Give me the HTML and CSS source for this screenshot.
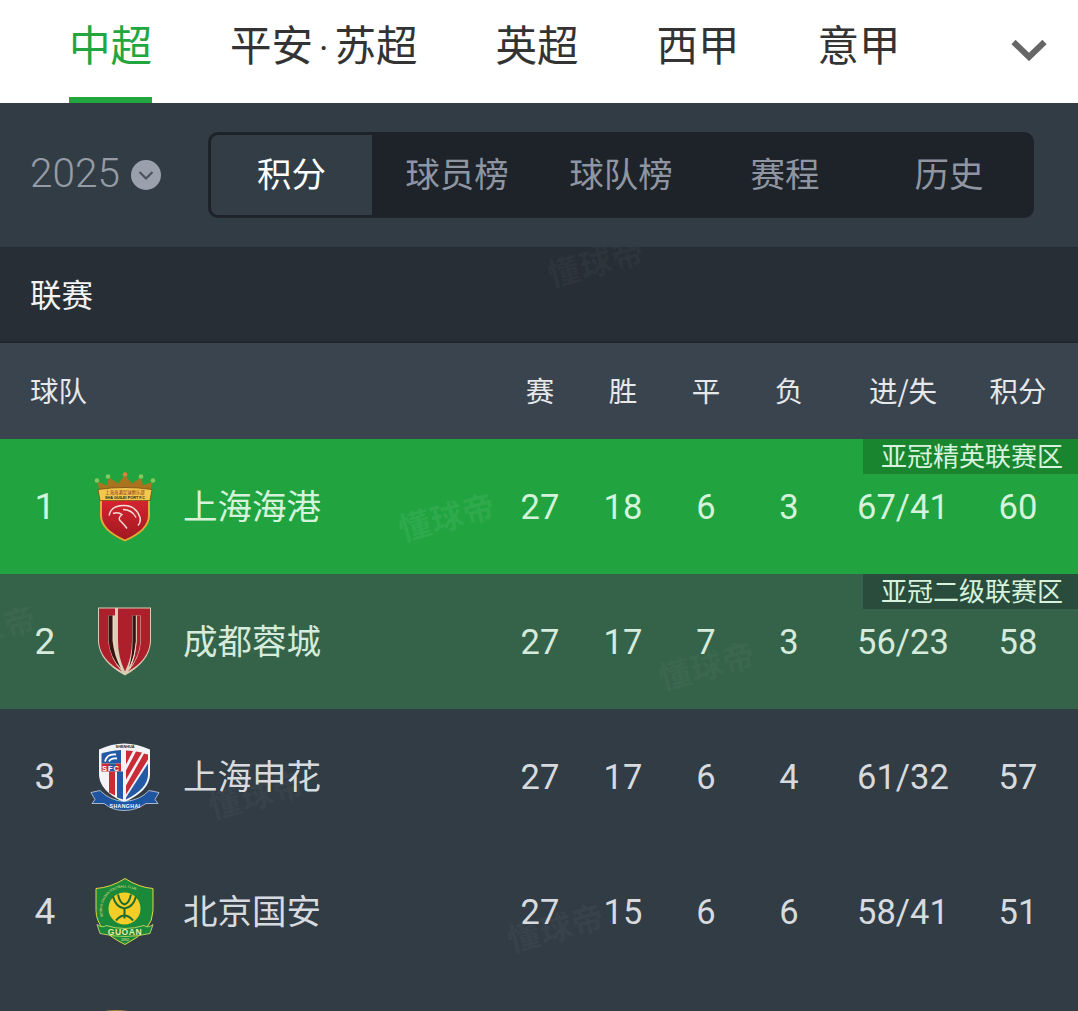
FILE: index.html
```html
<!DOCTYPE html>
<html lang="zh-CN">
<head>
<meta charset="utf-8">
<title>中超积分榜</title>
<link rel="stylesheet" href="styles.css">
</head>
<body>
<div class="page">
  <nav class="nav">
    <a class="nav-item active">中超</a>
    <a class="nav-item">平安<span class="dot">·</span>苏超</a>
    <a class="nav-item">英超</a>
    <a class="nav-item">西甲</a>
    <a class="nav-item">意甲</a>
    <svg class="nav-more" viewBox="0 0 36 22"><path d="M2.500 3 L18 18 L33.500 3" fill="none" stroke="#666" stroke-width="6"/></svg>
  </nav>

  <section class="season">
    <div class="year"><span class="year-num">2025</span><svg class="year-icon" viewBox="0 0 30 30"><circle cx="15" cy="15" r="15" fill="#9aa1ad"/><path d="M8.500 12 L15 18.500 L21.500 12" fill="none" stroke="#4b5360" stroke-width="2.200"/></svg></div>
    <div class="tabs">
      <div class="tab active">积分</div>
      <div class="tab">球员榜</div>
      <div class="tab">球队榜</div>
      <div class="tab">赛程</div>
      <div class="tab">历史</div>
    </div>
  </section>

  <div class="league">联赛<span class="wm wm-league">懂球帝</span></div>

  <div class="row head">
    <div class="rank-head">球队</div>
    <div class="c c1">赛</div><div class="c">胜</div><div class="c">平</div><div class="c">负</div><div class="c gd">进/失</div><div class="c pts">积分</div>
  </div>

  <div class="row team top1">
    <div class="rank">1</div>
    <svg class="crest" viewBox="0 1.500 90 90">
      <defs><linearGradient id="port-red" x1="0" y1="0" x2="0" y2="1"><stop offset="0" stop-color="#d3252e"/><stop offset="1" stop-color="#a31820"/></linearGradient></defs>
      <path fill="#a9731f" d="M20 31 L17 21 L27 25 L29 17 L38 23 L45 15 L52 23 L61 17 L63 25 L73 21 L70 31 Z"/>
      <circle cx="17" cy="20" r="2.300" fill="#7ecb5c"/><circle cx="28" cy="16" r="2.300" fill="#7ecb5c"/><circle cx="45" cy="14" r="2.300" fill="#d9863a"/><circle cx="61" cy="16" r="2.300" fill="#7ecb5c"/><circle cx="73" cy="20" r="2.300" fill="#7ecb5c"/>
      <path fill="#e2ac35" d="M20 36 H70 V55 Q70 70 45 81 Q20 70 20 55 Z"/>
      <path fill="url(#port-red)" d="M22 40 H68 V55 Q68 69 45 79 Q22 69 22 55 Z"/>
      <path fill="#f2c94c" stroke="#7a4a14" stroke-width=".8" d="M18 29 Q45 25 72 29 L70 40 H20 Z"/>
      <text class="crest-tiny" x="45" y="33.500" text-anchor="middle" fill="#8a1a18" font-size="4.400">上海海港足球俱乐部</text>
      <text class="crest-latin" x="45" y="38.600" text-anchor="middle" fill="#222" font-size="3.800" font-weight="700">SHA GUILEI PORT F.C</text>
      <path fill="none" stroke="#f4dcd9" stroke-width="1.500" d="M29 55 Q31 45 44 45 Q56 45 60 57 Q61 62 58 65 M33 53 Q38 51 42 54 Q37 58 41 61 Q45 65 47 68 M43 49 Q52 49 56 57"/>
    </svg>
    <div class="name">上海海港</div>
    <div class="c c1">27</div><div class="c">18</div><div class="c">6</div><div class="c">3</div><div class="c gd">67/41</div><div class="c pts">60</div>
    <span class="tag">亚冠精英联赛区</span>
    <span class="wm wm-r1">懂球帝</span>
  </div>

  <div class="row team top2">
    <div class="rank">2</div>
    <svg class="crest" viewBox="0 1.500 90 90">
      <path fill="#d9cdb4" d="M18 12 H71 V46 Q70 66 45 80 Q19 66 18 46 Z"/>
      <path fill="#ad1f2a" d="M19 13 H35 V20 H28 V45 Q30 64 42 76 Q20 64 19 46 Z"/>
      <path fill="#ad1f2a" d="M38 13 H70 V46 Q69 64 48 76 Q60 63 61 45 V20 H52 V45 Q52 62 45 76 Q38 62 38 45 Z"/>
      <path fill="#3a1214" d="M28.500 20 H32.500 V45 Q34 60 41 73 Q30 62 28.500 45 Z"/>
      <path fill="#3a1214" d="M52.500 20 H56 V46 Q55 60 49 72 Q52.500 60 52.500 45 Z"/>
      <path fill="#ad1f2a" d="M56.500 20 H60.500 V45 Q59.500 60 50.500 72 Q56 60 56.500 46 Z"/>
      <path fill="none" stroke="#e5dcc8" stroke-width=".9" d="M33.800 20 V45 Q35 60 42 74 M56.300 20 V46 Q55.500 60 50 73"/>
    </svg>
    <div class="name">成都蓉城</div>
    <div class="c c1">27</div><div class="c">17</div><div class="c">7</div><div class="c">3</div><div class="c gd">56/23</div><div class="c pts">58</div>
    <span class="tag">亚冠二级联赛区</span>
    <span class="wm wm-r2a">懂球帝</span>
    <span class="wm wm-r2b">懂球帝</span>
  </div>

  <div class="row team">
    <div class="rank">3</div>
    <svg class="crest" viewBox="0 -0.500 90 90">
      <path fill="#f4f4f6" d="M19 17 Q44 5 70 17 V42 Q70 58 44 70 Q19 58 19 42 Z"/>
      <path fill="#245aa5" d="M21.500 21 Q30 18 41 17.500 V31 H21.500 Z"/>
      <path fill="none" stroke="#fff" stroke-width="1.800" d="M25 29 Q27 21 36 22 M29 29 Q31 25 37 26"/>
      <path fill="#c92c36" d="M21.500 31 H29 V39 H21.500 Z"/>
      <path fill="#245aa5" d="M29 31 H36 V39 H29 Z"/>
      <path fill="#c92c36" d="M36 31 H41 V39 H36 Z"/>
      <text x="31" y="38" text-anchor="middle" fill="#fff" font-size="7.500" font-weight="700" letter-spacing="1" class="crest-latin">SFC</text>
      <path fill="#c92c36" d="M29 39 H35 V63 L29 60 Z"/>
      <path fill="#245aa5" d="M37 39 H43 V67 L37 65 Z"/>
      <path fill="#c92c36" d="M46 18 L53 18.500 L46 32 Z M56 19 L62 20 L46 47 V38 Z M64 21 L68 22 V27 L46 62 V53 Z"/>
      <path fill="#245aa5" d="M68 31 V42 Q68 56 46 67 V65 Z"/>
      <text x="45" y="15.500" text-anchor="middle" fill="#222" font-size="3.800" font-weight="700" class="crest-latin">SHENHUA</text>
      <path fill="#1f54a0" stroke="#dfe5ef" stroke-width=".7" d="M11 60 L20 58 Q30 68 44 69 Q60 68 69 58 L79 60 L75 67 L78 71 L66 71 Q56 78 44 78 Q33 78 24 71 L12 71 L15 67 Z"/>
      <text x="45" y="75.500" text-anchor="middle" fill="#fff" font-size="5.200" font-weight="700" letter-spacing=".4" class="crest-latin">SHANGHAI</text>
    </svg>
    <div class="name">上海申花</div>
    <div class="c c1">27</div><div class="c">17</div><div class="c">6</div><div class="c">4</div><div class="c gd">61/32</div><div class="c pts">57</div>
    <span class="wm wm-r3">懂球帝</span>
  </div>

  <div class="row team">
    <div class="rank">4</div>
    <svg class="crest" viewBox="0 -1.500 90 90">
      <defs><path id="guoan-arc" d="M23 48 A22.500 22.500 0 1 1 66 48"/></defs>
      <path fill="#1a8a3a" stroke="#e6d544" stroke-width="1" d="M16 20 Q31 19 45 10 Q59 19 73 20 V42 Q73 62 45 76 Q16 62 16 42 Z"/>
      <text class="crest-latin" font-size="3.300" fill="#e6e48a"><textPath href="#guoan-arc">BEIJING GUOAN FOOTBALL CLUB</textPath></text>
      <circle cx="44.500" cy="40" r="16" fill="#f4cd26"/>
      <path fill="none" stroke="#1a6b30" stroke-width="2" d="M33 28 Q36 39 44.500 40 Q53 39 56 28 M38 26 Q40 35 44.500 36 Q49 35 51 26 M44.500 40 V50 M36 52 Q44.500 42 53 52"/>
      <path fill="#1a8a3a" stroke="#d8e36b" stroke-width=".8" d="M17 56 Q23 60 26 57 Q45 63 64 57 Q68 60 73 56 L70 65 Q45 71 20 65 Z"/>
      <text class="crest-latin" x="45" y="66" text-anchor="middle" font-size="8.500" font-weight="700" letter-spacing=".6" fill="#eceaa8">GUOAN</text>
      <text class="crest-latin" x="45" y="72.500" text-anchor="middle" font-size="3.600" fill="#eceaa8">1992</text>
    </svg>
    <div class="name">北京国安</div>
    <div class="c c1">27</div><div class="c">15</div><div class="c">6</div><div class="c">6</div><div class="c gd">58/41</div><div class="c pts">51</div>
    <span class="wm wm-r4">懂球帝</span>
  </div>

  <div class="row team">
    <div class="rank"></div>
    <svg class="crest" viewBox="0 0 90 90"><path fill="#a98a3c" d="M20 10 Q36 6 53 10 V20 H20 Z"/></svg>
  </div>
</div>
</body>
</html>
```

FILE: styles.css
```css
* { box-sizing: border-box; }
html, body { margin: 0; height: 1011px; overflow: hidden; }
body { background: #323c45; font-family: Roboto, "Noto Sans CJK SC", sans-serif; }
.page { width: 1078px; height: 1011px; overflow: hidden; }

.nav { display: flex; height: 103px; background: #fff; padding-left: 69px; gap: 78px; position: relative; }
.nav-item { height: 103px; line-height: 87px; font-size: 41.500px; color: #333; font-family: "Noto Sans CJK SC", sans-serif; white-space: nowrap; }
.nav-item.active { color: #22a63f; border-bottom: 6px solid #22a63f; }
.dot { font-family: Roboto, sans-serif; font-size: 36px; margin: 0 6px; }
.nav-more { width: 36px; height: 22px; position: absolute; left: 1011px; top: 39px; }

.season { display: flex; align-items: center; height: 144px; padding: 0 44px 0 30px; background: #323c45; }
.year { width: 178px; display: flex; align-items: center; color: #959ca6; }
.year-num { font-size: 40.500px; font-weight: 300; margin-top: -5px; }
.year-icon { width: 30px; height: 30px; margin-left: 11px; }
.tabs { flex: 1; height: 86px; display: grid; grid-template-columns: repeat(5, 1fr); background: #1e232a; border: 3px solid #1e232a; border-radius: 10px; }
.tab { display: flex; align-items: center; justify-content: center; padding-bottom: 7px; font-size: 34.500px; color: #8f96a2; font-family: "Noto Sans CJK SC", sans-serif; }
.tab.active { background: #323d46; color: #fff; margin-right: 3px; border-radius: 7px 0 0 7px; }

.league { height: 96px; background: #272e35; color: #f2f3f4; font-size: 31.500px; line-height: 92px; padding-left: 30px; border-bottom: 2px solid #20262c; position: relative; overflow: hidden; font-family: "Noto Sans CJK SC", sans-serif; }

.row { display: grid; grid-template-columns: 80px 90px 328.500px repeat(4, 83px) 145px 85px; align-items: center; position: relative; }
.head { height: 96px; padding-bottom: 4px; background: #3a444f; color: #e6e8ea; font-size: 28.500px; font-family: "Noto Sans CJK SC", sans-serif; }
.rank-head { grid-column: 1 / 4; padding-left: 30px; }
.c { text-align: center; }
.team { height: 135px; background: #323c45; color: #d7dbdf; font-size: 34.500px; }
.rank { padding-left: 10px; text-align: center; font-size: 37px; }
.crest { width: 90px; height: 90px; display: block; }
.crest-tiny { font-family: "Noto Sans CJK SC", sans-serif; }
.crest-latin { font-family: "Liberation Sans", sans-serif; }
.name { font-size: 34.500px; padding-left: 13px; padding-bottom: 6px; font-family: "Noto Sans CJK SC", sans-serif; }

.top1 { background: #21a43f; color: #d4f3da; }
.top2 { background: #35634a; color: #d5ebdc; }
.tag { position: absolute; top: 0; right: 0; width: 215px; height: 35px; line-height: 32px; padding-left: 18px; font-size: 26px; white-space: nowrap; color: #d7f3de; font-family: "Noto Sans CJK SC", sans-serif; }
.top1 .tag { background: #19862f; }
.top2 .tag { background: #2a4c3c; }

.wm { position: absolute; font-size: 32px; font-weight: 700; letter-spacing: 1px; line-height: 1; color: rgba(255, 255, 255, .045); transform: rotate(-15deg); white-space: nowrap; pointer-events: none; font-family: "Noto Sans CJK SC", sans-serif; }
.wm-league { left: 546px; top: -2px; }
.wm-r1 { left: 397px; top: 60px; color: rgba(255, 255, 255, .07); }
.wm-r2a { left: -62px; top: 38px; }
.wm-r2b { left: 657px; top: 74px; }
.wm-r3 { left: 207px; top: 68px; }
.wm-r4 { left: 506px; top: 66px; }
```
